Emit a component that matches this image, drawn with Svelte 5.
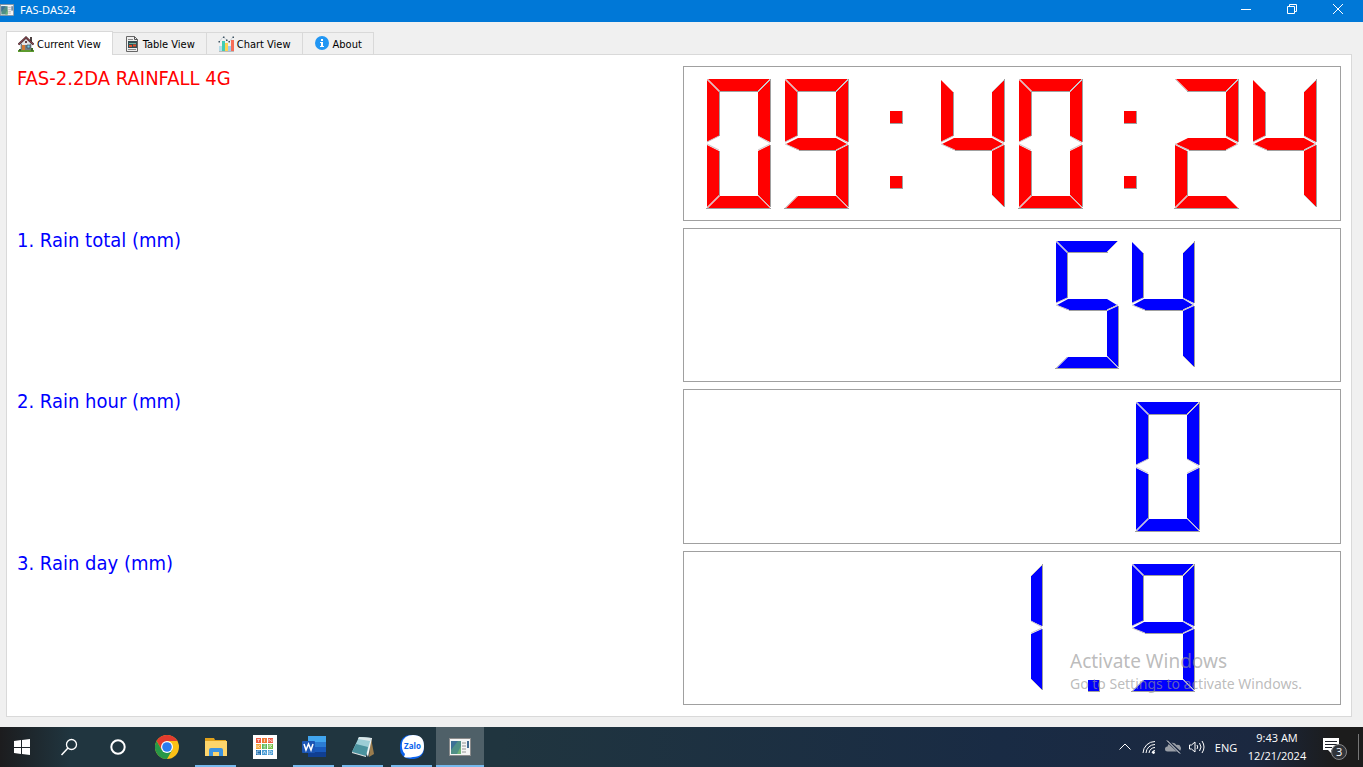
<script>
  const tabs = [
    { id: 'current', label: 'Current View' },
    { id: 'table', label: 'Table View' },
    { id: 'chart', label: 'Chart View' },
    { id: 'about', label: 'About' },
  ];

  const readings = [
    { label: 'FAS-2.2DA RAINFALL 4G', value: '09:40:24', color: 'red', x: 23, big: true },
    { label: '1. Rain total (mm)', value: '54', color: 'blue', x: 372, big: false },
    { label: '2. Rain hour (mm)', value: '0', color: 'blue', x: 452, big: true },
    { label: '3. Rain day (mm)', value: '1.9', color: 'blue', x: 296, big: false },
  ];

  const apps = [
    { id: 'start', label: 'Start' },
    { id: 'search', label: 'Search' },
    { id: 'cortana', label: 'Cortana' },
    { id: 'chrome', label: 'Google Chrome' },
    { id: 'explorer', label: 'File Explorer', running: true },
    { id: 'tinkercad', label: 'Tinkercad' },
    { id: 'word', label: 'Word', running: true },
    { id: 'notepad', label: 'Notepad', running: true },
    { id: 'zalo', label: 'Zalo', running: true },
    { id: 'das', label: 'FAS-DAS24', running: true, focused: true },
  ];

  const segments = {
    0: 'abcdef',
    1: 'bc',
    2: 'abged',
    3: 'abgcd',
    4: 'fgbc',
    5: 'afgcd',
    6: 'afgecd',
    7: 'abc',
    8: 'abcdefg',
    9: 'abcdfg',
  };

  let active = $state('current');

  // fill, dark edge (right / bottom) and light edge (diagonals) of each segment
  function shapes(big) {
    const w = big ? 63 : 62;
    const h = big ? 129 : 127;
    const t = big ? 12 : 11;
    const m = big ? 65 : 64;
    const r = w - t;
    const k = Math.floor(t / 2);
    return {
      a: {
        fill: `M1 0H${w}L${r} ${t}H${t + 1}Z`,
        dark: `M${t} ${t + 0.5}H${r + 1}`,
        light: `M0 0L${t} ${t}M${w} 0L${r} ${t}`,
      },
      b: {
        fill: `M${w} 1V${m - 2}L${r} ${m - k - 2}V${t + 1}Z`,
        dark: `M${w + 0.5} 0V${m - 2}`,
        light: `M${w} 1L${r} ${t + 1}M${r} ${m - k - 2}L${w} ${m - 1}`,
      },
      c: {
        fill: `M${w} ${m + 1}V${h - 1}L${r} ${h - t - 1}V${m + k + 1}Z`,
        dark: `M${w + 0.5} ${m + 1}V${h - 1}`,
        light: `M${w} ${m}L${r} ${m + k}M${r} ${h - t - 1}L${w} ${h - 1}`,
      },
      d: {
        fill: `M1 ${h}L${t + 1} ${h - t}H${r}L${w} ${h}Z`,
        dark: `M-1 ${h + 0.5}H${w + 1}`,
        light: `M0 ${h}L${t} ${h - t}`,
      },
      e: {
        fill: `M0 ${m + 1}L${t} ${m + k + 1}V${h - t - 1}L0 ${h - 1}Z`,
        dark: `M${t + 0.5} ${m + k + 1}V${h - t}`,
        light: `M0 ${m}L${t} ${m + k}M0 ${h}L${t} ${h - t}`,
      },
      f: {
        fill: `M0 1L${t} ${t + 1}V${m - k - 2}L0 ${m - 2}Z`,
        dark: `M${t + 0.5} ${t + 1}V${m - k - 2}`,
        light: `M0 ${m - 2}L${t} ${m - k - 2}`,
      },
      g: {
        fill: `M1 ${m}L${t + 1} ${m + k - t}H${r}L${w - 1} ${m}L${r} ${m + k}H${t + 1}Z`,
        dark: `M${t + 2} ${m + k + 0.5}H${r}`,
        light: `M0 ${m}L${t + 2} ${m + k}M${w} ${m}L${r} ${m + k}`,
      },
    };
  }

  function layout({ value, x, big }) {
    const parts = [];
    const set = shapes(big);
    const pitch = big ? 78 : 76;
    const s = big ? 12 : 11;
    [...value].forEach((char, i) => {
      const at = x + i * pitch;
      if (char === ':' || char === '.') {
        const left = char === ':' ? 27 : 32;
        const tops = char === ':' ? [32, 97] : [116];
        tops.forEach((y) =>
          parts.push({
            at,
            fill: `M${left} ${y}h${s}v${s}h-${s}Z`,
            dark: `M${left + s + 0.5} ${y}v${s + 1}M${left} ${y + s + 0.5}h${s}`,
            light: '',
          })
        );
      } else {
        [...segments[char]].forEach((name) => parts.push({ at, ...set[name] }));
      }
    });
    return parts;
  }
</script>

{#snippet windowIcon()}
  <rect x="0.5" y="2.5" width="21" height="17" fill="#f4f4f4" stroke="#8c8c8c" />
  <rect x="2" y="5" width="10" height="13" fill="#4f8f86" />
  <path d="M2 5h7L2 14Z" fill="#3d7097" />
  <path d="M8 18l4-8v8Z" fill="#6fb277" />
  <path d="M13 7h4M13 10h4M13 13h4M13 16h4" stroke="#c4c4c4" stroke-width="2" />
  <rect x="18" y="5" width="2" height="7" fill="#426b91" />
{/snippet}

<div class="desktop">
  <header class="titlebar">
    <svg class="app-icon" viewBox="0 0 22 22">{@render windowIcon()}</svg>
    <span class="caption">FAS-DAS24</span>
    <button aria-label="Minimize">
      <svg viewBox="0 0 10 10"><path d="M0 5.5h10" /></svg>
    </button>
    <button aria-label="Restore">
      <svg viewBox="0 0 10 10"><path d="M.5 2.5h7v7h-7zM2.5 2.5v-2h7v7h-2" /></svg>
    </button>
    <button aria-label="Close">
      <svg viewBox="0 0 10 10"><path d="M0 0l10 10M10 0L0 10" /></svg>
    </button>
  </header>

  <main>
    <div class="tabs" role="tablist">
      {#each tabs as tab}
        <button role="tab" class="tab" class:active={active === tab.id} aria-selected={active === tab.id} onclick={() => (active = tab.id)}>
          <svg viewBox="0 0 16 16">
            {#if tab.id === 'current'}
              <path d="M0 14h16v2H0z" fill="#5d9b2f" />
              <path d="M2 8l6-6 6 6v6H2z" fill="#c9d0d3" />
              <path d="M12 1h2v5h-2z" fill="#4c4040" />
              <path d="M3 8h10v6H3z" fill="#727d83" />
              <path d="M4 7l4-4 4 4v2H4z" fill="#e4e6e8" />
              <path d="M.5 8.500L8 1.500l7.500 7" fill="none" stroke="#443036" stroke-width="2.200" />
              <path d="M.5 8.500L8 1.500l7.500 7" fill="none" stroke="#9c4a50" />
              <path d="M4 9h3v5H4z" fill="#d17a34" />
              <path d="M9 9h3v3H9z" fill="#73c9e9" stroke="#394b55" stroke-width=".7" />
              <path d="M7 5h2v2H7z" fill="#614247" />
              <path d="M1 13h2v2H1zM13 12h2v3h-2z" fill="#3e6829" />
            {:else if tab.id === 'table'}
              <path d="M2.500.5h8l3 3v12h-11z" fill="#eee" stroke="#666" />
              <path d="M10.500.5v3h3" fill="none" stroke="#555" />
              <path d="M4 3.500h5M4 13.500h8" stroke="#888" />
              <path d="M4 5h9v7H4z" fill="#334d53" />
              <path d="M5 7.500h7" stroke="#6cb2a1" />
              <path d="M5 10h3M9 9.500h3" stroke="#e3502b" stroke-width="2" />
            {:else if tab.id === 'chart'}
              <path d="M1 15.500h15" stroke="#bbb" />
              <path d="M1 10h3v5H1z" fill="#b4dce8" />
              <path d="M4 5h3v10H4z" fill="#43ccb4" />
              <path d="M7 7h3v8H7z" fill="#ffd251" />
              <path d="M10 10h3v5h-3z" fill="#9ccdf1" />
              <path d="M13 4h3v11h-3z" fill="#f76d58" />
              <path d="M1 6l4-5 4 3 2 2 4-5" fill="none" stroke="#b8c4cd" stroke-width=".7" />
              <path d="M.5 5h1.500v1.500H.5zM5 .5h1.500V2H5zM8 3.500h1.500V5H8zM10.500 5H12v1.500h-1.500zM14.500.5H16V2h-1.500z" fill="#3e5362" />
            {:else}
              <circle cx="8" cy="7" r="7" fill="#2196f3" />
              <path d="M7 3h2v2H7zM6 6h3v4h1v1H6v-1h1V7H6z" fill="#fff" />
            {/if}
          </svg>
          <span>{tab.label}</span>
        </button>
      {/each}
    </div>

    <section class="page" role="tabpanel">
      {#if active === 'current'}
        {#each readings as reading}
          <div class="row">
            <h2 class={reading.color}>{reading.label}</h2>
            <div class="lcd">
              <svg class={reading.color} viewBox="0 0 656 152" preserveAspectRatio="xMidYMin meet" role="img" aria-label={reading.value}>
                {#each layout(reading) as part}
                  <g transform="translate({part.at} 12)">
                    <path class="fill" d={part.fill} />
                    <path class="light" d={part.light} />
                    <path class="dark" d={part.dark} />
                  </g>
                {/each}
              </svg>
            </div>
          </div>
        {/each}
      {/if}
    </section>
  </main>

  <div class="watermark">
    <p class="big">Activate Windows</p>
    <p>Go to Settings to activate Windows.</p>
  </div>

  <footer class="taskbar">
    <nav>
      {#each apps as app}
        <button class="app" class:running={app.running} class:focused={app.focused} aria-label={app.label}>
          <svg viewBox="0 0 24 24">
            {#if app.id === 'start'}
              <path d="M4 6l7-1v7H4zM12 5l8-1v8h-8zM4 13h7v6l-7-1zM12 13h8v7l-8-1z" fill="#fff" />
            {:else if app.id === 'search'}
              <circle cx="14.500" cy="9.500" r="5" fill="none" stroke="#fff" stroke-width="1.300" />
              <path d="M11 13l-6.500 7" stroke="#fff" stroke-width="1.500" />
            {:else if app.id === 'cortana'}
              <circle cx="12" cy="12" r="6.700" fill="none" stroke="#fff" stroke-width="2" />
            {:else if app.id === 'chrome'}
              <circle cx="12" cy="12" r="12" fill="#fbc116" />
              <path d="M1.600 6A12 12 0 0 1 22.400 6H12L6.800 15z" fill="#e33b2e" />
              <path d="M1.600 6A12 12 0 0 0 12 24l5.200-9H6.800z" fill="#279847" />
              <circle cx="12" cy="12" r="6" fill="#fff" />
              <circle cx="12" cy="12" r="4.800" fill="#2c7cf0" />
            {:else if app.id === 'explorer'}
              <path d="M1 3h9l1 2h11v16H1z" fill="#e1a21b" />
              <path d="M1 6h22v15H1z" fill="#fdd56b" />
              <path d="M5 21v-6q0-2 2-2h10q2 0 2 2v6h-4v-4H9v4z" fill="#3c93df" />
            {:else if app.id === 'tinkercad'}
              <path d="M0 0h24v24H0z" fill="#fff" />
              <path d="M3 3h5v5H3zM15 3h5v5h-5z" fill="#ef5b43" />
              <path d="M9 3h5v5H9z" fill="#f07a34" />
              <path d="M3 9h5v5H3z" fill="#f4a22f" />
              <path d="M9 9h5v5H9z" fill="#5cb85a" />
              <path d="M15 9h5v5h-5z" fill="#75bf44" />
              <path d="M3 15h5v5H3z" fill="#1d6eae" />
              <path d="M9 15h5v5H9zM15 15h5v5h-5z" fill="#4b9dd5" />
              <path d="M4 4.500h3M5.500 4.500V7M11.500 4v3M16 7V4l3 3V4M4 10v3M7 10l-2 1.500 2 1.500M10.500 10h2.500M10.500 11.500h2M10.500 13h2.500M16 13v-3h3l-2 1.500 2 1.500M7 16H4v3h3M10 19l1.500-3 1.500 3M16 16h2l1 1.500-1 1.500h-2z" fill="none" stroke="#fff" stroke-width=".6" />
            {:else if app.id === 'word'}
              <path d="M6 1h18v6H6z" fill="#41a5ee" />
              <path d="M6 7h18v5H6z" fill="#2b7cd3" />
              <path d="M6 12h18v5H6z" fill="#185abd" />
              <path d="M6 17h18v5H6z" fill="#103f91" />
              <rect y="6" width="13" height="12" rx="1" fill="#1b56b5" />
              <path d="M2 9l2 6 2.500-6L9 15l2-6" fill="none" stroke="#fff" stroke-width="1.500" />
            {:else if app.id === 'notepad'}
              <path d="M20 3l3 16-5 3z" fill="#9a7c4d" />
              <path d="M8 2l13 1-4 19z" fill="#f3f5f4" />
              <path d="M8 2l12 1-5 18L1 17z" fill="#9ccdd6" />
              <path d="M5 9l12 3-2 9L1 17z" fill="#4a929e" />
              <path d="M8 2l12 1-1 3L7 4z" fill="#dbe7e9" />
              <path d="M1 17l14 4v1L1 18z" fill="#e8eded" />
            {:else if app.id === 'zalo'}
              <rect width="24" height="24" rx="10" fill="#0a62ed" />
              <path d="M13 0Q24 0 24 11T13 22Q8 23 4 22l1-3Q1 15 2 8 4 0 13 0z" fill="#fff" />
              <text x="4" y="14">Zalo</text>
            {:else}
              <g transform="translate(1 1)">{@render windowIcon()}</g>
            {/if}
          </svg>
        </button>
      {/each}
    </nav>

    <div class="tray">
      <button aria-label="Show hidden icons">
        <svg viewBox="0 0 16 16"><path d="M2.500 10.500L8 5l5.500 5.500" /></svg>
      </button>
      <button aria-label="Network">
        <svg viewBox="0 0 16 16">
          <path d="M2 14A12 12 0 0 1 14 2.500M5 14a9 9 0 0 1 9-8.500M8 14a6 6 0 0 1 6-5.500M11 14a3 3 0 0 1 3-2.500" />
          <circle cx="12.500" cy="13.500" r="1" fill="#fff" />
        </svg>
      </button>
      <button aria-label="OneDrive">
        <svg viewBox="0 0 16 16">
          <path d="M2.500 12.500a2.500 2.500 0 0 1 0-5 5 5 0 0 1 9-1.500 3 3 0 0 1 2 6.500z" fill="#999ea6" stroke="none" />
          <path d="M2 1.500l13 12" stroke="#1b2840" stroke-width="3" />
          <path d="M2 1.500l13 13" />
        </svg>
      </button>
      <button aria-label="Volume">
        <svg viewBox="0 0 16 16"><path d="M.5 6v4h2L6 13V3L2.500 6zM8 6q1.500 2 0 4M10.500 4q3 4 0 8M13 2q4 6 0 12" /></svg>
      </button>
      <button class="lang">ENG</button>
      <button class="clock"><span>9:43 AM</span><span>12/21/2024</span></button>
      <button class="notes" aria-label="Notifications">
        <svg viewBox="0 0 26 26">
          <path d="M1 4h16v12H9v3l-3-3H1z" fill="#fff" stroke="none" />
          <path d="M3 7.500h12M3 10.500h12M3 13.500h7" stroke="#1c2029" />
          <circle cx="17" cy="18" r="7.500" fill="#30343a" stroke="#888" />
          <text x="14" y="22">3</text>
        </svg>
      </button>
    </div>
  </footer>
</div>

<style>
  :global(body) {
    margin: 0;
  }

  .desktop {
    position: relative;
    display: flex;
    flex-direction: column;
    height: 100vh;
    background: #f0f0f0;
    font-family: 'DejaVu Sans Condensed', 'DejaVu Sans', sans-serif;
  }

  button {
    border: none;
    padding: 0;
    background: none;
    font: inherit;
    color: inherit;
  }

  svg {
    display: block;
  }

  .titlebar {
    display: flex;
    align-items: flex-start;
    height: 22px;
    padding-right: 2px;
    background: #0078d7;
    color: #fff;
    font-family: 'Noto Sans', 'Open Sans', sans-serif;
    font-size: 11px;
    line-height: 20px;
  }

  .app-icon {
    width: 14px;
    height: 20px;
  }

  .caption {
    flex: 1;
    padding-left: 6px;
  }

  .titlebar button {
    display: flex;
    align-items: center;
    justify-content: center;
    width: 46px;
    height: 18px;
  }

  .titlebar button svg {
    width: 10px;
    height: 10px;
    fill: none;
    stroke: #fff;
  }

  main {
    flex: 1;
    display: flex;
    flex-direction: column;
    min-height: 0;
    padding: 9px 11px 10px 6px;
  }

  .tabs {
    display: flex;
    align-items: flex-end;
    height: 23px;
  }

  .tab {
    display: flex;
    align-items: center;
    gap: 3px;
    height: 22px;
    padding: 0 11px;
    border: 1px solid #d9d9d9;
    border-left: none;
    border-bottom: none;
    font-size: 11px;
    color: #000;
    white-space: nowrap;
  }

  .tab span {
    padding-top: 2px;
  }

  .tab.active {
    z-index: 1;
    height: 24px;
    margin-bottom: -1px;
    border-left: 1px solid #d9d9d9;
    background: #fff;
  }

  .tab svg {
    width: 16px;
    height: 16px;
  }

  .page {
    flex: 1;
    display: grid;
    grid-template-rows: repeat(4, minmax(0, 1fr));
    gap: 7px;
    padding: 11px 10px;
    border: 1px solid #d9d9d9;
    background: #fff;
  }

  .row {
    display: grid;
    grid-template-columns: 1fr 1fr;
    gap: 8px;
  }

  h2 {
    margin: 0;
    font-size: 20px;
    font-weight: normal;
    line-height: 24px;
  }

  h2.red {
    color: #f00;
  }

  h2.blue {
    color: #00f;
  }

  .lcd {
    min-height: 0;
    border: 1px solid #a0a0a0;
  }

  .lcd svg {
    width: 100%;
    height: 100%;
  }

  .red .fill {
    fill: #f00;
  }

  .blue .fill {
    fill: #00f;
  }

  .light {
    fill: none;
    stroke: #ccc6ca;
  }

  .dark {
    fill: none;
    stroke: #a0a0a0;
  }

  .watermark {
    position: absolute;
    right: 57px;
    bottom: 72px;
    width: 236px;
    color: rgba(150, 150, 150, 0.65);
    font-family: 'Noto Sans', 'Open Sans', sans-serif;
    font-size: 14px;
    white-space: nowrap;
    pointer-events: none;
  }

  .watermark p {
    margin: 0;
    line-height: 22px;
  }

  .watermark .big {
    font-size: 19px;
    line-height: 24px;
  }

  .taskbar {
    display: flex;
    justify-content: space-between;
    height: 40px;
    background: linear-gradient(90deg, #1c1c1e 0, #20353f 70px, #20353f 500px, #192b44 1000px, #1b2840 92%, #1c1c1c 98%);
    color: #fff;
    font-family: 'Open Sans', sans-serif;
    font-size: 11px;
  }

  nav {
    display: flex;
  }

  .app {
    display: flex;
    align-items: center;
    justify-content: center;
    box-sizing: border-box;
    width: 49px;
    border: solid transparent;
    border-width: 2px 4px;
  }

  .app:first-child {
    width: 44px;
  }

  .app svg {
    width: 24px;
    height: 24px;
  }

  .app.running {
    border-bottom-color: #76b9ed;
    border-left-width: 0;
    border-right-width: 0;
    width: 41px;
    margin: 0 4px;
  }

  .app.focused {
    width: 48px;
    margin: 0;
    background: #4f6068;
  }

  .app text {
    fill: #0a62ed;
    font-size: 8px;
    font-weight: bold;
  }

  .tray {
    display: flex;
    align-items: center;
    padding-right: 4px;
  }

  .tray button {
    width: 24px;
  }

  .tray svg {
    width: 16px;
    height: 16px;
    margin: 0 auto;
    fill: none;
    stroke: #fff;
  }

  .tray .lang {
    width: 34px;
  }

  .tray .clock {
    display: flex;
    flex-direction: column;
    align-items: center;
    width: 68px;
    line-height: 18px;
  }

  .tray .notes {
    width: 48px;
    border-right: 1px solid #777;
  }

  .tray .notes svg {
    width: 26px;
    height: 26px;
  }

  .notes text {
    fill: #fff;
    stroke: none;
    font-size: 11px;
  }
</style>
